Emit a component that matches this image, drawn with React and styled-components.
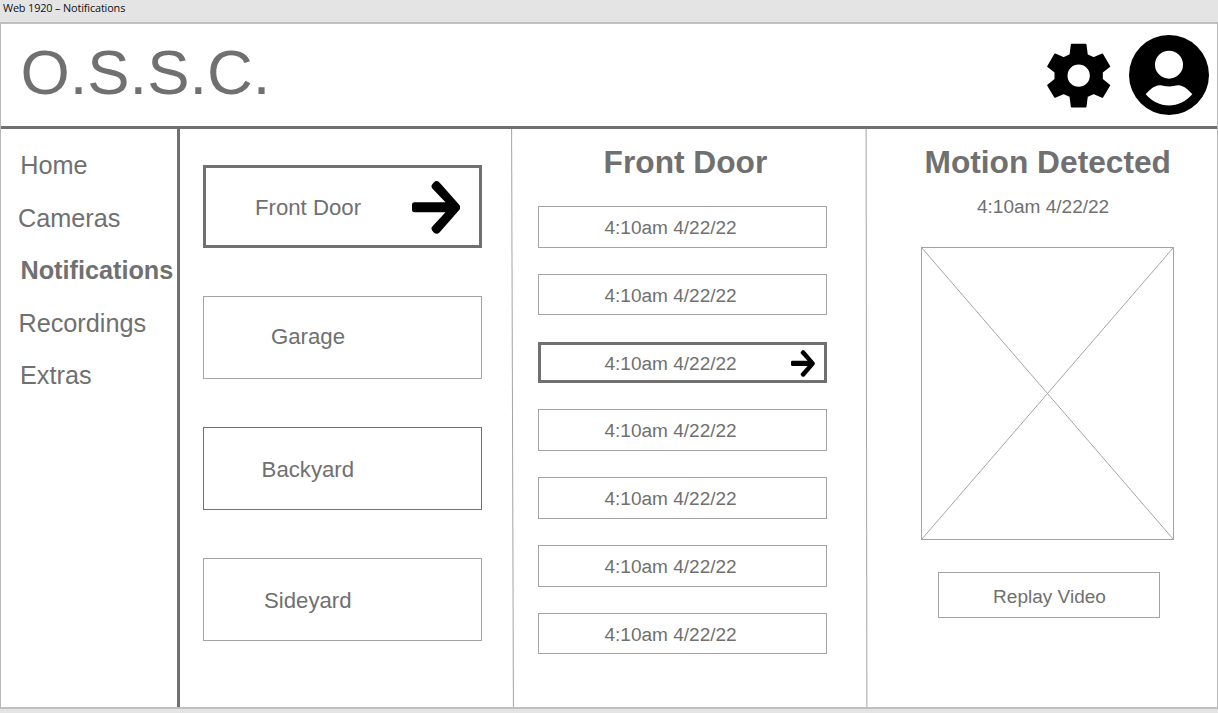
import React from 'react';
import styled, { createGlobalStyle, css } from 'styled-components';

const GlobalStyle = createGlobalStyle`
  * { box-sizing: border-box; }
  body { margin: 0; background: #e4e4e4; font-family: "Liberation Sans", Arial, sans-serif; color: #707070; overflow: hidden; }
`;

const Workspace = styled.div`
  display: flex;
  flex-direction: column;
  width: 1218px;
  height: 713px;
`;

const ArtboardLabel = styled.div`
  height: 22px;
  padding: 0 0 0 3px;
  font: 10.9px/15px "Open Sans", "Noto Sans", sans-serif;
  letter-spacing: -0.15px;
  color: #111;
`;

const Artboard = styled.main`
  display: flex;
  flex-direction: column;
  height: 687px;
  background: #fff;
  border: 1px solid #b9b9b9;
  border-top: 2px solid #c0c0c0;
  border-bottom: 2px solid #c0c0c0;
`;

const Header = styled.header`
  display: flex;
  align-items: flex-start;
  height: 105px;
  padding: 12px 8px 0 19.4px;
  border-bottom: 3px solid #707070;
`;

const Brand = styled.h1`
  margin: 0 auto 0 0;
  font-size: 63.4px;
  line-height: 73px;
  font-weight: 400;
`;

const HeaderIcon = styled.svg`
  display: block;
  width: ${p => p.$w}px;
  height: ${p => p.$h}px;
  margin: ${p => p.$margin};
  fill: #000;
`;

const Body = styled.div`
  display: flex;
  flex: 1;
  min-height: 0;
`;

const Sidebar = styled.nav`
  width: 179px;
  padding-top: 22px;
  border-right: 3px solid #707070;
`;

const NavItem = styled.a`
  display: block;
  height: 52.5px;
  padding-left: ${p => p.$indent}px;
  font-size: 25.25px;
  line-height: 29px;
  font-weight: ${p => (p.$active ? 700 : 400)};
  white-space: nowrap;
`;

const Divider = styled.div`
  width: 1px;
  background: #a4a4a4;
  transform: skewX(${p => p.$skew}deg);
`;

const CameraList = styled.section`
  display: flex;
  flex-direction: column;
  gap: 48.6px;
  width: 332px;
  padding: 36.2px 30px 0 23px;
`;

const selected = css`
  border: 3px solid #707070;
`;

const CameraCard = styled.div`
  display: flex;
  align-items: center;
  justify-content: space-between;
  height: 82.5px;
  width: 279px;
  padding: ${p => p.$drop}px 19px ${p => p.$lift}px ${p => p.$indent}px;
  border: 1px solid ${p => (p.$focused ? '#2a7fe0' : '#a4a4a4')};
  font-size: 22.19px;
  line-height: 26px;
  ${p => p.$selected && selected}
`;

const EventColumn = styled.section`
  width: 353px;
  padding: 14px 0 0 25px;
`;

const ColumnTitle = styled.h2`
  margin: 0;
  padding-left: ${p => p.$indent}px;
  font-size: 31.7px;
  line-height: 38px;
  font-weight: 700;
  white-space: nowrap;
`;

const EventList = styled.div`
  display: flex;
  flex-direction: column;
  gap: 26.2px;
  margin-top: 25px;
`;

const EventRow = styled.div`
  display: flex;
  align-items: center;
  justify-content: space-between;
  width: 289px;
  height: 41.6px;
  padding: 2.4px 11px 0 65.5px;
  border: 1px solid #a4a4a4;
  font-size: 19.02px;
  line-height: 22px;
  ${p => p.$selected && css`
    ${selected}
    padding: 2.4px 9px 0 63.5px;
  `}
`;

const Detail = styled.section`
  flex: 1;
  padding-top: 14px;
`;

const Timestamp = styled.div`
  margin: 15px 0 0 110px;
  font-size: 19.02px;
  line-height: 22px;
`;

const VideoPlaceholder = styled.svg`
  display: block;
  width: 253px;
  height: 293px;
  margin: 29px 0 0 54px;
  fill: none;
  stroke: #a4a4a4;
`;

const ReplayButton = styled.button`
  display: block;
  width: 222px;
  height: 46px;
  margin: 32px 0 0 71px;
  padding: 3px 0 0 1px;
  background: #fff;
  border: 1px solid #a4a4a4;
  color: inherit;
  font: 19.02px/22px "Liberation Sans", Arial, sans-serif;
`;

const ArrowSvg = styled.svg`
  display: block;
  flex: none;
  margin-bottom: 1px;
`;

const Arrow = ({ w, h }) => (
  <ArrowSvg width={w} height={h} viewBox="0 0 48.5 53" preserveAspectRatio="none">
    <path d="M27.5 1.4L47 23.6Q49.5 26.4 47 29.2L27.5 51.4Q24.5 54 21.8 51.4L20.3 49.8Q18.6 47.5 20.3 45.4L33.5 31.3H2.5Q0 31.3 0 28.8V24Q0 21.3 2.5 21.3H33.5L20.3 7.4Q18.6 5.3 20.3 3.2L21.8 1.4Q24.5 -1.2 27.5 1.4Z" />
  </ArrowSvg>
);

const navigation = [
  ['Home', 19.2], ['Cameras', 17], ['Notifications', 19.4], ['Recordings', 17.4], ['Extras', 19],
];
const cameras = [
  { name: 'Front Door', indent: 49, drop: 2.6, lift: 0 },
  { name: 'Garage', indent: 67, drop: 0, lift: 2 },
  { name: 'Backyard', indent: 57.6, drop: 2, lift: 0 },
  { name: 'Sideyard', indent: 60, drop: 2, lift: 0 },
];
const events = Array.from({ length: 7 }, () => '4:10am 4/22/22');

export default function App() {
  return (
    <Workspace>
      <GlobalStyle />
      <ArtboardLabel>Web 1920 – Notifications</ArtboardLabel>
      <Artboard>
        <Header>
          <Brand>O.S.S.C.</Brand>
          <HeaderIcon $w={65} $h={65} $margin="7px 18px 0 0" viewBox="18 22 195 195">
            <path
              fillRule="evenodd"
              stroke="#000"
              strokeWidth="5"
              strokeLinejoin="round"
              d="M95 27H137L141 58L161 67L187 56L208 92L186 109V131L208 149L187 184L161 173L141 182L137 213H95L91 182L71 173L45 184L24 149L46 131V109L24 92L45 56L71 67L91 58ZM116 84A36 36 0 1 0 116 156A36 36 0 1 0 116 84Z"
            />
          </HeaderIcon>
          <HeaderIcon $w={80} $h={80} $margin="-1px 0 0" viewBox="0 0 80 80">
            <path fillRule="evenodd" d="M40 0a40 40 0 1 0 0 80a40 40 0 0 0 0-80ZM40 15.7a14 14 0 1 1 0 28a14 14 0 0 1 0-28ZM16.7 59.3C20 55 25.5 50.4 30.5 50.2C34 50.1 36 51.5 40 51.5S46 50.1 49.5 50.2C54.5 50.4 60 55 63.3 59.3C57 66.5 49 70.5 40 70.5S23 66.5 16.7 59.3Z" />
          </HeaderIcon>
        </Header>
        <Body>
          <Sidebar>
            {navigation.map(([name, indent]) => (
              <NavItem key={name} $indent={indent} $active={name === 'Notifications'}>{name}</NavItem>
            ))}
          </Sidebar>
          <CameraList>
            {cameras.map(({ name, indent, drop, lift }, i) => (
              <CameraCard
                key={name}
                $indent={indent}
                $drop={drop}
                $lift={lift}
                $selected={i === 0}
                $focused={name === 'Backyard'}
              >
                {name}
                {i === 0 && <Arrow w={48.5} h={53} />}
              </CameraCard>
            ))}
          </CameraList>
          <Divider $skew={0.18} />
          <EventColumn>
            <ColumnTitle $indent={65.6}>Front Door</ColumnTitle>
            <EventList>
              {events.map((time, i) => (
                <EventRow key={i} $selected={i === 2}>
                  {time}
                  {i === 2 && <Arrow w={24} h={27} />}
                </EventRow>
              ))}
            </EventList>
          </EventColumn>
          <Divider $skew={0.08} />
          <Detail>
            <ColumnTitle $indent={57.5}>Motion Detected</ColumnTitle>
            <Timestamp>4:10am 4/22/22</Timestamp>
            <VideoPlaceholder viewBox="0 0 253 293">
              <rect x=".5" y=".5" width="252" height="292" />
              <path d="M.5 .5L252.5 292.5M252.5 .5L.5 292.5" />
            </VideoPlaceholder>
            <ReplayButton>Replay Video</ReplayButton>
          </Detail>
        </Body>
      </Artboard>
    </Workspace>
  );
}
